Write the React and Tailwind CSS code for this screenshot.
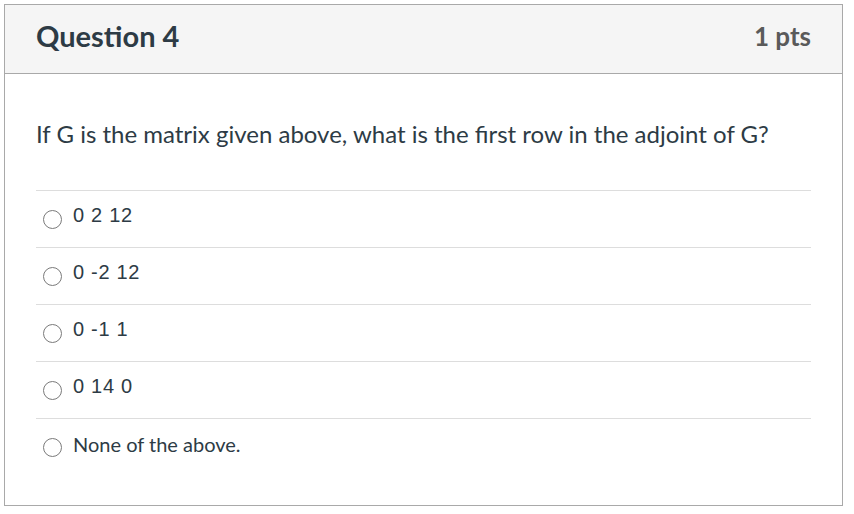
import React from 'react';

const answers = [
    { label: '0 2 12', numeric: true },
    { label: '0 -2 12', numeric: true },
    { label: '0 -1 1', numeric: true },
    { label: '0 14 0', numeric: true },
    { label: 'None of the above.', numeric: false },
];

export default function App() {
    return (
        <div className="w-[854px] h-[514px] bg-white pt-[4px] pl-[4px] font-['Lato',sans-serif]">
            <div className="w-[839px] h-[502px] border border-[#a9a9a9] bg-white">
                {/* Header */}
                <div className="h-[69px] bg-[#f5f5f5] border-b border-[#a9a9a9] flex items-center justify-between px-[31px] pb-[7px]">
                    <h2 className="text-[29px] font-bold text-[#2d3b45] leading-none">Question 4</h2>
                    <div className="text-[26px] font-bold text-[#5a5a5a] leading-none">1 pts</div>
                </div>

                {/* Body */}
                <div className="px-[31px] pt-[44px]">
                    <p className="text-[24px] leading-[32px] text-[#2d3b45] mb-[40px]">
                        If G is the matrix given above, what is the first row in the adjoint of G?
                    </p>

                    <div>
                        {answers.map((a) => (
                            <label key={a.label} className="h-[57px] border-t border-[#dddddd] flex items-center">
                                <span className="ml-[7px] w-[19px] h-[19px] rounded-full border-[1.5px] border-[#7a7a7a] bg-white shrink-0" />
                                <span
                                    className={
                                        a.numeric
                                            ? "ml-[11px] mb-[8px] text-[20px] leading-[24px] tracking-[0.7px] text-[#2d3b45] font-['Liberation_Sans',Arial,sans-serif]"
                                            : "ml-[11px] mb-[7px] text-[20px] leading-[24px] text-[#2d3b45]"
                                    }
                                >
                                    {a.label}
                                </span>
                            </label>
                        ))}
                    </div>
                </div>
            </div>
        </div>
    );
}
